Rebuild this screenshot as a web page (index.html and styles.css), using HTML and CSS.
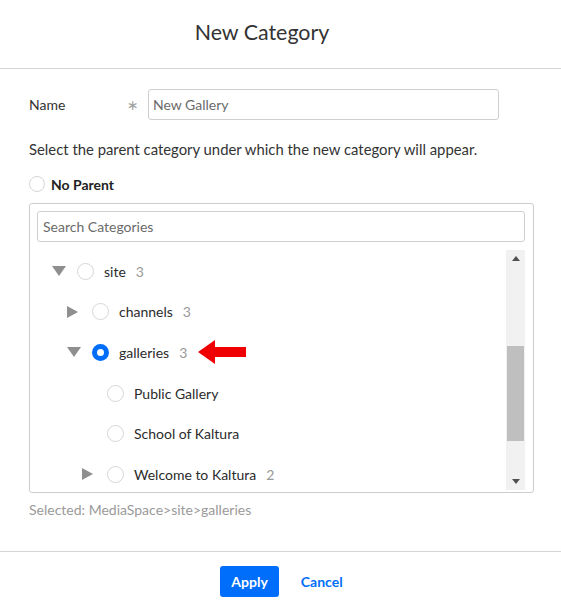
FILE: index.html
```html
<!DOCTYPE html>
<html lang="en">
<head>
<meta charset="utf-8">
<title>New Category</title>
<link rel="stylesheet" href="styles.css">
</head>
<body>
<div class="dialog">
  <header class="dialog-header">
    <h1 class="dialog-title">New Category</h1>
  </header>
  <main class="dialog-body">
    <div class="field-row">
      <label class="field-label" for="cat-name">Name</label>
      <span class="field-required">∗</span>
      <input id="cat-name" class="text-input name-input" type="text" placeholder="New Gallery">
    </div>
    <p class="instructions">Select the parent category under which the new category will appear.</p>
    <div class="no-parent">
      <span class="radio"></span>
      <span class="no-parent-label">No Parent</span>
    </div>
    <div class="tree-box">
      <input class="text-input search-input" type="text" placeholder="Search Categories">
      <div class="tree-area">
        <ul class="tree-list">
          <li class="tree-row level-0">
            <span class="toggle"><svg width="14" height="10" viewBox="0 0 14 10"><path d="M0 0H14L7 10Z" fill="#8f8f8f"/></svg></span>
            <span class="radio"></span>
            <span class="node-name">site</span><span class="node-count">3</span>
          </li>
          <li class="tree-row level-1">
            <span class="toggle"><svg width="11" height="12" viewBox="0 0 11 12"><path d="M0 0V12L11 6Z" fill="#8f8f8f"/></svg></span>
            <span class="radio"></span>
            <span class="node-name">channels</span><span class="node-count">3</span>
          </li>
          <li class="tree-row level-1">
            <span class="toggle"><svg width="14" height="10" viewBox="0 0 14 10"><path d="M0 0H14L7 10Z" fill="#8f8f8f"/></svg></span>
            <span class="radio radio-checked"></span>
            <span class="node-name">galleries</span><span class="node-count">3</span>
            <svg class="pointer-arrow" width="48" height="26" viewBox="0 0 48 26"><path d="M0 13L17 1V8H48V18H17V25Z" fill="#f00000"/></svg>
          </li>
          <li class="tree-row level-2">
            <span class="toggle"></span>
            <span class="radio"></span>
            <span class="node-name">Public Gallery</span>
          </li>
          <li class="tree-row level-2">
            <span class="toggle"></span>
            <span class="radio"></span>
            <span class="node-name">School of Kaltura</span>
          </li>
          <li class="tree-row level-2">
            <span class="toggle"><svg width="11" height="12" viewBox="0 0 11 12"><path d="M0 0V12L11 6Z" fill="#8f8f8f"/></svg></span>
            <span class="radio"></span>
            <span class="node-name">Welcome to Kaltura</span><span class="node-count">2</span>
          </li>
        </ul>
        <div class="scrollbar">
          <div class="scroll-btn"><svg width="8" height="5" viewBox="0 0 8 5"><path d="M0 5L4 0L8 5Z" fill="#505050"/></svg></div>
          <div class="scroll-track"><div class="scroll-thumb"></div></div>
          <div class="scroll-btn"><svg width="8" height="5" viewBox="0 0 8 5"><path d="M0 0H8L4 5Z" fill="#505050"/></svg></div>
        </div>
      </div>
    </div>
    <p class="selected-path">Selected: MediaSpace&gt;site&gt;galleries</p>
  </main>
  <footer class="dialog-footer">
    <button class="btn btn-primary" type="button">Apply</button>
    <button class="btn btn-link" type="button">Cancel</button>
  </footer>
</div>
</body>
</html>
```

FILE: styles.css
```css
* {
  box-sizing: border-box;
}

html, body {
  margin: 0;
  padding: 0;
  background: #ffffff;
}

body {
  font-family: "Lato", "Open Sans", "Liberation Sans", sans-serif;
  color: #333333;
  font-size: 14px;
}

.dialog {
  width: 561px;
  min-height: 611px;
  background: #ffffff;
}

.dialog-header {
  padding: 19px 37px 23px 0;
  border-bottom: 1px solid #d4d4d4;
}

.dialog-title {
  margin: 0;
  text-align: center;
  font-size: 21.4px;
  line-height: 26px;
  font-weight: 400;
  color: #333333;
}

.dialog-body {
  padding: 20px 27px 32px 29px;
}

.field-row {
  display: flex;
  align-items: center;
}

.field-label {
  width: 98px;
  font-size: 14px;
  color: #333333;
}

.field-required {
  width: 21px;
  color: #a0a0a0;
  font-family: "DejaVu Sans", sans-serif;
  font-size: 14px;
  line-height: 20px;
}

.text-input {
  font-family: inherit;
  font-size: 14px;
  color: #333333;
  border: 1px solid #cfcfcf;
  border-radius: 3px;
  background: #ffffff;
  outline: none;
}

.text-input::placeholder {
  color: #6b6b6b;
  opacity: 1;
}

.name-input {
  width: 351px;
  height: 31px;
  padding: 0 4px;
}

.instructions {
  margin: 19px 0 0;
  font-size: 14.85px;
  line-height: 20px;
  color: #333333;
}

.no-parent {
  display: flex;
  align-items: center;
  gap: 6px;
  margin-top: 17px;
  height: 16px;
}

.no-parent .radio {
  width: 16px;
  height: 16px;
}

.no-parent-label {
  font-weight: 700;
  font-size: 14px;
  color: #222222;
}

.radio {
  display: inline-block;
  flex: none;
  width: 17px;
  height: 17px;
  border-radius: 50%;
  border: 1px solid #d6d6d6;
  background: #ffffff;
}

.radio-checked {
  border: 5px solid #006efa;
}

.tree-box {
  margin-top: 11px;
  border: 1px solid #cdcdcd;
  border-radius: 3px;
  padding: 7px 8px 2px 7px;
}

.search-input {
  display: block;
  width: 100%;
  height: 31px;
  padding: 0 5px;
}

.tree-area {
  display: flex;
  margin-top: 8px;
  height: 240px;
}

.tree-list {
  flex: 1;
  list-style: none;
  margin: 0;
  padding: 1px 0 0;
  overflow: hidden;
}

.tree-row {
  display: flex;
  align-items: center;
  height: 40.6px;
  padding-left: 15px;
}

.tree-row.level-1 {
  padding-left: 30px;
}

.tree-row.level-2 {
  padding-left: 45px;
}

.toggle {
  flex: none;
  width: 15px;
  margin-right: 10px;
  display: flex;
  align-items: center;
  justify-content: flex-start;
}

.toggle svg {
  display: block;
}

.tree-row .radio {
  margin-right: 10px;
}

.node-name {
  font-size: 14px;
  color: #2b2b2b;
}

.node-count {
  margin-left: 10px;
  font-size: 14px;
  color: #999999;
}

.pointer-arrow {
  display: block;
  margin-left: 11px;
  flex: none;
}

.scrollbar {
  flex: none;
  width: 19px;
  display: flex;
  flex-direction: column;
  background: #f1f1f1;
}

.scroll-btn {
  height: 17px;
  display: flex;
  align-items: center;
  justify-content: center;
}

.scroll-btn svg {
  display: block;
}

.scroll-track {
  flex: 1;
  padding: 79px 1px 0;
}

.scroll-thumb {
  height: 95px;
  background: #bfbfbf;
}

.selected-path {
  margin: 8px 0 0;
  font-size: 14px;
  line-height: 18px;
  color: #9a9a9a;
}

.dialog-footer {
  border-top: 1px solid #d4d4d4;
  padding: 14px 0 14px 14px;
  display: flex;
  justify-content: center;
  gap: 10px;
}

.btn {
  font-family: inherit;
  font-size: 14px;
  font-weight: 700;
  height: 31px;
  padding: 0 11px;
  border-radius: 3px;
  border: none;
  cursor: pointer;
}

.btn-primary {
  background: #006efa;
  color: #ffffff;
}

.btn-link {
  background: transparent;
  color: #006efa;
  padding: 0 12px;
}
```
